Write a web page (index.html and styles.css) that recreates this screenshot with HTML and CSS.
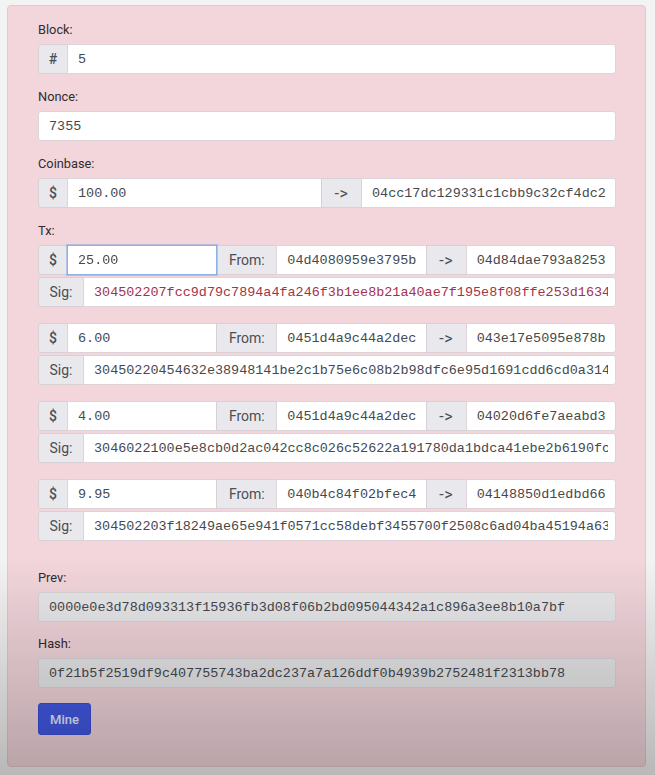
FILE: index.html
```html
<!DOCTYPE html>
<html lang="en">
<head>
<meta charset="utf-8">
<title>Block</title>
<link rel="stylesheet" href="styles.css">
</head>
<body>
<div class="page">
  <div class="card">
    <form class="card-body">
      <div class="group">
        <label class="lbl">Block:</label>
        <div class="igroup">
          <span class="addon w30">#</span>
          <input class="field" type="text" value="5">
        </div>
      </div>

      <div class="group">
        <label class="lbl">Nonce:</label>
        <div class="igroup">
          <input class="field" type="text" value="7355">
        </div>
      </div>

      <div class="group">
        <label class="lbl">Coinbase:</label>
        <div class="igroup">
          <span class="addon w30">$</span>
          <input class="field" type="text" value="100.00">
          <span class="addon w40">-&gt;</span>
          <input class="field" type="text" value="04cc17dc129331c1cbb9c32cf4dc2">
        </div>
      </div>

      <div class="group group-tx">
        <label class="lbl">Tx:</label>
        <div class="tx-list">
          <div class="tx">
            <div class="igroup">
              <span class="addon w30">$</span>
              <input class="field is-focus" type="text" value="25.00">
              <span class="addon w60">From:</span>
              <input class="field" type="text" value="04d4080959e3795b">
              <span class="addon w40">-&gt;</span>
              <input class="field" type="text" value="04d84dae793a8253">
            </div>
            <div class="igroup">
              <span class="addon w45">Sig:</span>
              <input class="field sig-bad" type="text" value="304502207fcc9d79c7894a4fa246f3b1ee8b21a40ae7f195e8f08ffe253d1634">
            </div>
          </div>

          <div class="tx">
            <div class="igroup">
              <span class="addon w30">$</span>
              <input class="field" type="text" value="6.00">
              <span class="addon w60">From:</span>
              <input class="field" type="text" value="0451d4a9c44a2dec">
              <span class="addon w40">-&gt;</span>
              <input class="field" type="text" value="043e17e5095e878b">
            </div>
            <div class="igroup">
              <span class="addon w45">Sig:</span>
              <input class="field" type="text" value="30450220454632e38948141be2c1b75e6c08b2b98dfc6e95d1691cdd6cd0a314">
            </div>
          </div>

          <div class="tx">
            <div class="igroup">
              <span class="addon w30">$</span>
              <input class="field" type="text" value="4.00">
              <span class="addon w60">From:</span>
              <input class="field" type="text" value="0451d4a9c44a2dec">
              <span class="addon w40">-&gt;</span>
              <input class="field" type="text" value="04020d6fe7aeabd3">
            </div>
            <div class="igroup">
              <span class="addon w45">Sig:</span>
              <input class="field" type="text" value="3046022100e5e8cb0d2ac042cc8c026c52622a191780da1bdca41ebe2b6190fc">
            </div>
          </div>

          <div class="tx">
            <div class="igroup">
              <span class="addon w30">$</span>
              <input class="field" type="text" value="9.95">
              <span class="addon w60">From:</span>
              <input class="field" type="text" value="040b4c84f02bfec4">
              <span class="addon w40">-&gt;</span>
              <input class="field" type="text" value="04148850d1edbd66">
            </div>
            <div class="igroup">
              <span class="addon w45">Sig:</span>
              <input class="field" type="text" value="304502203f18249ae65e941f0571cc58debf3455700f2508c6ad04ba45194a63">
            </div>
          </div>
        </div>
      </div>

      <div class="group group-prev">
        <label class="lbl">Prev:</label>
        <div class="igroup">
          <input class="field ro" type="text" readonly value="0000e0e3d78d093313f15936fb3d08f06b2bd095044342a1c896a3ee8b10a7bf">
        </div>
      </div>

      <div class="group group-hash">
        <label class="lbl">Hash:</label>
        <div class="igroup">
          <input class="field ro" type="text" readonly value="0f21b5f2519df9c407755743ba2dc237a7a126ddf0b4939b2752481f2313bb78">
        </div>
      </div>

      <button class="btn-mine" type="button">Mine</button>
    </form>
  </div>
</div>
</body>
</html>
```

FILE: styles.css
```css
* {
  box-sizing: border-box;
}

html, body {
  margin: 0;
  padding: 0;
}

body {
  background: #f3f3f3;
  font-family: Roboto, "Liberation Sans", Arial, sans-serif;
  font-size: 12.8px;
  color: #2f2a2c;
  min-height: 775px;
}

body::after {
  content: "";
  position: fixed;
  left: 0;
  top: 0;
  right: 0;
  bottom: 0;
  pointer-events: none;
  background: linear-gradient(to bottom,
    rgba(0, 0, 0, 0) 0%,
    rgba(0, 0, 0, 0) 72%,
    rgba(0, 0, 0, 0.24) 100%);
}

.page {
  padding: 5px 9px 0 7px;
}

.card {
  background: #f2d6dc;
  border: 1px solid #e3c9cf;
  border-radius: 4px;
}

.card-body {
  padding: 14px 29px 31px 30px;
  margin: 0;
}

.group {
  margin-bottom: 13px;
}

.group-tx {
  margin-bottom: 27px;
}

.group-prev {
  margin-bottom: 12px;
}

.group-hash {
  margin-bottom: 15px;
}

.lbl {
  display: block;
  line-height: 19px;
  margin-bottom: 5px;
  color: #332c2e;
}

.tx-list {
  display: flex;
  flex-direction: column;
  gap: 16px;
}

.tx {
  display: flex;
  flex-direction: column;
  gap: 2px;
}

.igroup {
  display: flex;
  height: 30px;
}

.addon {
  flex: none;
  display: flex;
  align-items: center;
  justify-content: center;
  height: 30px;
  background: #e9e8ec;
  border: 1px solid #d8d0d4;
  color: #4a4f55;
  font-size: 14px;
  margin-right: -1px;
}

.addon.w30 {
  font-weight: 500;
}

.addon.w40 {
  font-size: 16px;
  letter-spacing: 0.5px;
}

.w30 { width: 30px; }
.w40 { width: 41px; }
.w45 { width: 46px; }
.w60 { width: 61px; }

.field {
  flex: 1 1 0;
  min-width: 0;
  height: 30px;
  margin: 0;
  padding: 0 7px 0 10px;
  border: 1px solid #ded4d8;
  background: #ffffff;
  color: #45494e;
  font-family: "Liberation Mono", "Courier New", monospace;
  font-size: 13.45px;
  outline: none;
  margin-right: -1px;
}

.igroup > :first-child {
  border-top-left-radius: 3px;
  border-bottom-left-radius: 3px;
}

.igroup > :last-child {
  border-top-right-radius: 3px;
  border-bottom-right-radius: 3px;
  margin-right: 0;
}

.field.is-focus {
  position: relative;
  border: 1px solid #8fb1e6;
  box-shadow: 0 0 0 1px rgba(110, 150, 225, 0.45);
  z-index: 1;
}

.field.sig-bad {
  color: #a3334a;
}

.field.ro {
  background: #e9e8ea;
  border-color: #dcd6d9;
  color: #45494e;
}

.btn-mine {
  display: block;
  width: 53px;
  height: 32px;
  padding: 0;
  border: 1px solid #3a50d8;
  border-radius: 3px;
  background: #4359e4;
  color: #e6eeff;
  font-family: Roboto, "Liberation Sans", Arial, sans-serif;
  font-size: 13px;
  font-weight: 500;
  cursor: pointer;
}
```
